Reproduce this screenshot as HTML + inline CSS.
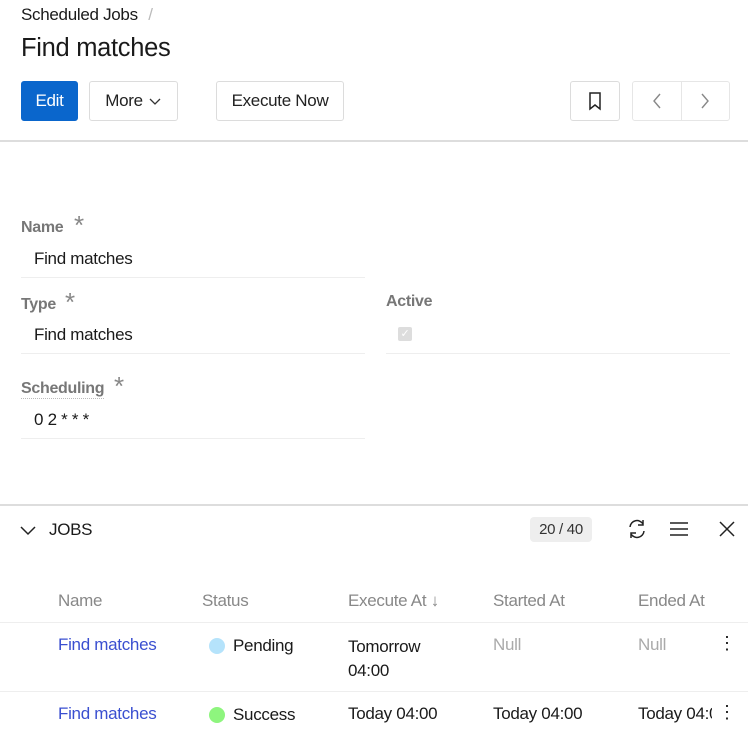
<!DOCTYPE html>
<html><head><style>
*{box-sizing:border-box;margin:0;padding:0}
body{width:748px;height:736px;overflow:hidden;background:#fff;font-family:"Liberation Sans",sans-serif;color:#1a1a1a;position:relative;font-size:17px;letter-spacing:-0.3px}
.a{position:absolute;white-space:nowrap}
.btn{position:absolute;top:81px;height:40px;border:1px solid #dcdcdc;border-radius:3px;display:flex;align-items:center;justify-content:center;background:#fff;font-size:17px;color:#222}
.lbl{color:#777;font-weight:bold;font-size:16px}
.star{position:absolute;color:#888;font-size:26px;font-weight:normal;top:-9px}
.line{position:absolute;height:1px;background:#eee}
.hd{color:#888;font-size:17px}
.lnk{color:#3a4fd0}
.dot{position:absolute;width:16px;height:16px;border-radius:50%}
</style></head><body>
<div class="a" style="left:21px;top:5px;font-size:17px">Scheduled Jobs <span style="color:#bbb;margin-left:6px">/</span></div>
<div class="a" style="left:21px;top:34px;font-size:25.5px">Find matches</div>
<div class="btn" style="left:21px;width:57px;background:#0a66cc;border-color:#0a66cc;color:#fff">Edit</div>
<div class="btn" style="left:89px;width:89px">More <svg width="14" height="10" style="margin-left:5px"><path d="M2 3l5 5 5-5" fill="none" stroke="#333" stroke-width="1.3"/></svg></div>
<div class="btn" style="left:216px;width:128px">Execute Now</div>
<div class="btn" style="left:570px;width:50px"><svg width="14" height="20"><path d="M2 2h10v16l-5-4-5 4z" fill="none" stroke="#222" stroke-width="1.5"/></svg></div>
<div class="btn" style="left:632px;width:98px;justify-content:space-around;border-color:#e6e6e6"><svg width="12" height="20"><path d="M9 3L3 10l6 7" fill="none" stroke="#888" stroke-width="1.4"/></svg><span style="position:absolute;left:48px;top:0;bottom:0;width:1px;background:#e6e6e6"></span><svg width="12" height="20"><path d="M3 3l6 7-6 7" fill="none" stroke="#888" stroke-width="1.4"/></svg></div>
<div class="a" style="left:0;top:140px;width:748px;height:2px;background:#ddd"></div>

<div class="a lbl" style="left:21px;top:219px">Name<span class="star" style="left:53px">*</span></div>
<div class="a" style="left:34px;top:249px">Find matches</div>
<div class="line" style="left:21px;top:277px;width:344px"></div>
<div class="a lbl" style="left:21px;top:296px">Type<span class="star" style="left:44px">*</span></div>
<div class="a" style="left:34px;top:325px">Find matches</div>
<div class="line" style="left:21px;top:353px;width:344px"></div>
<div class="a lbl" style="left:386px;top:293px">Active</div>
<div class="a" style="left:398px;top:327px;width:14px;height:14px;background:#ddd;border-radius:2px;color:#fff;font-size:11px;text-align:center;line-height:14px">✓</div>
<div class="line" style="left:386px;top:353px;width:344px"></div>
<div class="a lbl" style="left:21px;top:380px;border-bottom:1px dotted #bbb">Scheduling<span class="star" style="left:93px">*</span></div>
<div class="a" style="left:34px;top:410px">0 2 * * *</div>
<div class="line" style="left:21px;top:438px;width:344px"></div>

<div class="a" style="left:0;top:504px;width:748px;height:2px;background:#ddd"></div>
<svg class="a" style="left:19px;top:524px" width="18" height="12"><path d="M2 3l7 7 7-7" fill="none" stroke="#222" stroke-width="1.5"/></svg>
<div class="a" style="left:49px;top:520px">JOBS</div>
<div class="a" style="left:530px;top:517px;width:62px;height:25px;background:#eee;border-radius:4px;font-size:15px;text-align:center;line-height:25px;color:#333">20 / 40</div>
<svg class="a" style="left:626px;top:517px" width="22" height="24"><path d="M4 10a7 7 0 0 1 13-3M18 14a7 7 0 0 1-13 3" fill="none" stroke="#222" stroke-width="1.5"/><path d="M17 3v5h-5M5 21v-5h5" fill="none" stroke="#222" stroke-width="1.5"/></svg>
<svg class="a" style="left:669px;top:520px" width="20" height="18"><path d="M1 3h18M1 9h18M1 15h18" stroke="#222" stroke-width="1.5"/></svg>
<svg class="a" style="left:718px;top:520px" width="18" height="18"><path d="M2 2l14 14M16 2L2 16" stroke="#222" stroke-width="1.5"/></svg>

<div class="a hd" style="left:58px;top:591px">Name</div>
<div class="a hd" style="left:202px;top:591px">Status</div>
<div class="a hd" style="left:348px;top:591px">Execute At ↓</div>
<div class="a hd" style="left:493px;top:591px">Started At</div>
<div class="a hd" style="left:638px;top:591px">Ended At</div>
<div class="line" style="left:0;top:622px;width:748px"></div>
<div class="a lnk" style="left:58px;top:635px">Find matches</div>
<div class="dot" style="left:209px;top:638px;background:#b5e3fb"></div>
<div class="a" style="left:233px;top:636px">Pending</div>
<div class="a" style="left:348px;top:635px;line-height:24px">Tomorrow<br>04:00</div>
<div class="a" style="left:493px;top:635px;color:#aaa">Null</div>
<div class="a" style="left:638px;top:635px;color:#aaa">Null</div>
<div class="a" style="left:718px;top:633px;font-size:18px">⋮</div>
<div class="line" style="left:0;top:691px;width:748px"></div>
<div class="a lnk" style="left:58px;top:704px">Find matches</div>
<div class="dot" style="left:209px;top:707px;background:#8ef57e"></div>
<div class="a" style="left:233px;top:705px">Success</div>
<div class="a" style="left:348px;top:704px">Today 04:00</div>
<div class="a" style="left:493px;top:704px">Today 04:00</div>
<div class="a" style="left:638px;top:704px;width:74px;overflow:hidden">Today 04:00</div>
<div class="a" style="left:718px;top:702px;font-size:18px">⋮</div>
</body></html>
